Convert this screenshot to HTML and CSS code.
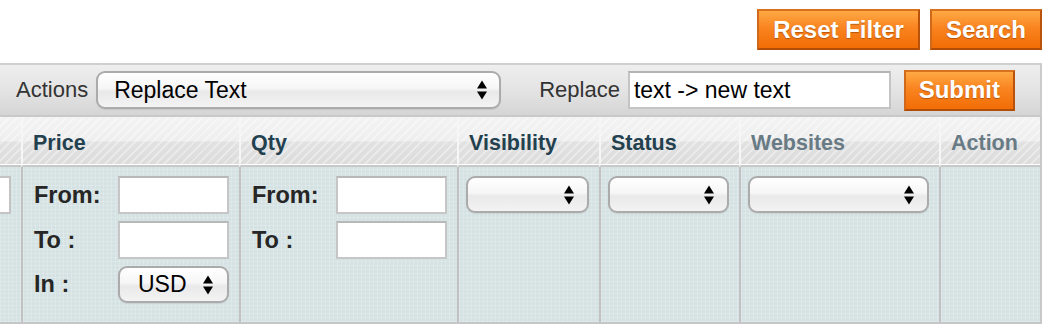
FILE: index.html
```html
<!DOCTYPE html>
<html lang="en">
<head>
    <meta charset="UTF-8">
    <meta name="viewport" content="width=device-width, initial-scale=1.0">
    <title>Products Grid</title>
    <link rel="stylesheet" href="styles.css">
</head>
<body>
    <div class="grid-actions">
        <button type="button" class="button">Reset Filter</button>
        <button type="button" class="button button-search">Search</button>
    </div>

    <div class="massaction">
        <label class="mass-label">Actions</label>
        <div class="select select-actions">
            <span>Replace Text</span>
            <svg class="arrows" width="10" height="22" viewBox="0 0 10 22"><path d="M0 9.5 L5 1.5 L10 9.5 Z M0 12.5 L10 12.5 L5 20.5 Z" fill="#000"/></svg>
        </div>
        <label class="mass-label label-replace" for="replace">Replace</label>
        <input type="text" id="replace" class="input-replace" value="text -> new text">
        <button type="button" class="button button-submit">Submit</button>
    </div>

    <div class="grid">
        <div class="th"></div>
        <div class="th">Price</div>
        <div class="th">Qty</div>
        <div class="th">Visibility</div>
        <div class="th">Status</div>
        <div class="th th-off">Websites</div>
        <div class="th th-off">Action</div>

        <div class="td"><div class="input-stub"></div></div>
        <div class="td">
            <div class="range">
                <label>From:</label><input type="text">
                <label>To :</label><input type="text">
                <label>In :</label>
                <div class="select select-small">
                    <span>USD</span>
                    <svg class="arrows" width="10" height="22" viewBox="0 0 10 22"><path d="M0 9.5 L5 1.5 L10 9.5 Z M0 12.5 L10 12.5 L5 20.5 Z" fill="#000"/></svg>
                </div>
            </div>
        </div>
        <div class="td">
            <div class="range">
                <label>From:</label><input type="text">
                <label>To :</label><input type="text">
            </div>
        </div>
        <div class="td td-select">
            <div class="select select-filter">
                <span></span>
                <svg class="arrows" width="10" height="22" viewBox="0 0 10 22"><path d="M0 9.5 L5 1.5 L10 9.5 Z M0 12.5 L10 12.5 L5 20.5 Z" fill="#000"/></svg>
            </div>
        </div>
        <div class="td td-select">
            <div class="select select-filter">
                <span></span>
                <svg class="arrows" width="10" height="22" viewBox="0 0 10 22"><path d="M0 9.5 L5 1.5 L10 9.5 Z M0 12.5 L10 12.5 L5 20.5 Z" fill="#000"/></svg>
            </div>
        </div>
        <div class="td td-select">
            <div class="select select-filter">
                <span></span>
                <svg class="arrows" width="10" height="22" viewBox="0 0 10 22"><path d="M0 9.5 L5 1.5 L10 9.5 Z M0 12.5 L10 12.5 L5 20.5 Z" fill="#000"/></svg>
            </div>
        </div>
        <div class="td"></div>
    </div>
</body>
</html>
```

FILE: styles.css
```css
body {
    font-family: "Liberation Sans", Arial, sans-serif;
    background-color: #fff;
    margin: 0;
    padding: 0;
    width: 1052px;
}
.grid-actions {
    display: flex;
    justify-content: flex-end;
    gap: 10px;
    padding: 9px 10px 0 0;
    height: 54px;
}
.button {
    height: 41px;
    padding: 0;
    font-family: "Liberation Sans", Arial, sans-serif;
    font-size: 24px;
    font-weight: bold;
    color: #fff;
    text-shadow: 0 1px 1px rgba(120, 50, 0, 0.5);
    background: linear-gradient(#ffa944, #f98420 45%, #f26d05);
    border: 2px solid #c8600f;
    border-color: #d8721f #b9520a #b04d08 #d06a1a;
    cursor: pointer;
}
.grid-actions .button {
    width: 163px;
}
.grid-actions .button-search {
    width: 112px;
}
.massaction {
    display: flex;
    align-items: center;
    width: 1040px;
    height: 50px;
    border-top: 2px solid #cfcfcf;
    border-bottom: 2px solid #c9c9c9;
    border-right: 2px solid #cbcbcb;
    background: linear-gradient(#eeeeee, #e4e4e4 50%, #d5d5d5);
}
.mass-label {
    font-size: 22px;
    color: #333;
    margin-left: 16px;
    margin-right: 8px;
}
.label-replace {
    margin-left: 38px;
}
.select {
    box-sizing: border-box;
    display: flex;
    justify-content: space-between;
    align-items: center;
    height: 38px;
    padding: 0 12px 0 16px;
    font-size: 23px;
    color: #000;
    border: 2px solid #ababab;
    border-radius: 9px;
    background: linear-gradient(#ffffff, #f6f6f6 45%, #e9e9e9 55%, #f3f3f3);
    box-shadow: 0 1px 1px rgba(0, 0, 0, 0.08);
}
.select-actions {
    width: 405px;
}
.input-replace {
    box-sizing: border-box;
    width: 263px;
    height: 38px;
    padding: 0 4px;
    font-family: "Liberation Sans", Arial, sans-serif;
    font-size: 23px;
    color: #000;
    border: 2px solid #c4c4c4;
    border-top-color: #b4b4b4;
    margin: 0;
}
.button-submit {
    width: 111px;
    margin-left: 13px;
}
.grid {
    display: grid;
    grid-template-columns: 21px 218px 218px 142px 140px 200px 101px;
    grid-template-rows: 50px 155px;
    width: 1040px;
    border-right: 2px solid #c8c8c8;
    border-bottom: 2px solid #c6c6c6;
}
.th {
    box-sizing: border-box;
    border-left: 2px solid #f6f6f6;
    border-bottom: 2px solid #c8c8c8;
    padding: 14px 0 0 10px;
    font-size: 21.5px;
    font-weight: bold;
    color: #23404f;
    background:
        repeating-linear-gradient(135deg, rgba(255, 255, 255, 0.35) 0 2px, transparent 2px 6px),
        linear-gradient(#f3f3f3, #eeeeee 50%, #e1e1e1 52%, #dcdcdc);
    box-shadow: inset 0 -1px 0 #fff;
}
.th:first-child {
    border-left: none;
}
.th-off {
    color: #687b85;
}
.td {
    box-sizing: border-box;
    border-left: 2px solid #c2c2c2;
    padding-top: 9px;
    background-color: #d5e2e3;
    background-image:
        repeating-linear-gradient(0deg, rgba(255, 255, 255, 0.18) 0 1px, transparent 1px 4px),
        repeating-linear-gradient(90deg, rgba(255, 255, 255, 0.18) 0 1px, transparent 1px 4px);
}
.td:nth-child(8) {
    border-left: none;
}
.input-stub {
    width: 11px;
    height: 38px;
    box-sizing: border-box;
    background: #fff;
    border: 2px solid #c4c4c4;
    border-left: none;
}
.range {
    display: grid;
    grid-template-columns: 84px 111px;
    row-gap: 7px;
    padding-left: 11px;
    align-items: center;
}
.range label {
    font-size: 23.5px;
    font-weight: bold;
    color: #262626;
}
.range input {
    box-sizing: border-box;
    width: 111px;
    height: 38px;
    margin: 0;
    background: #fff;
    border: 2px solid #c6c6c6;
    border-top-color: #b8b8b8;
}
.select-small {
    width: 111px;
    height: 37px;
    padding: 0 14px 0 18px;
}
.td-select {
    padding: 9px 10px 0 7px;
}
.select-filter {
    width: 100%;
    height: 37px;
    padding-right: 13px;
}
```
